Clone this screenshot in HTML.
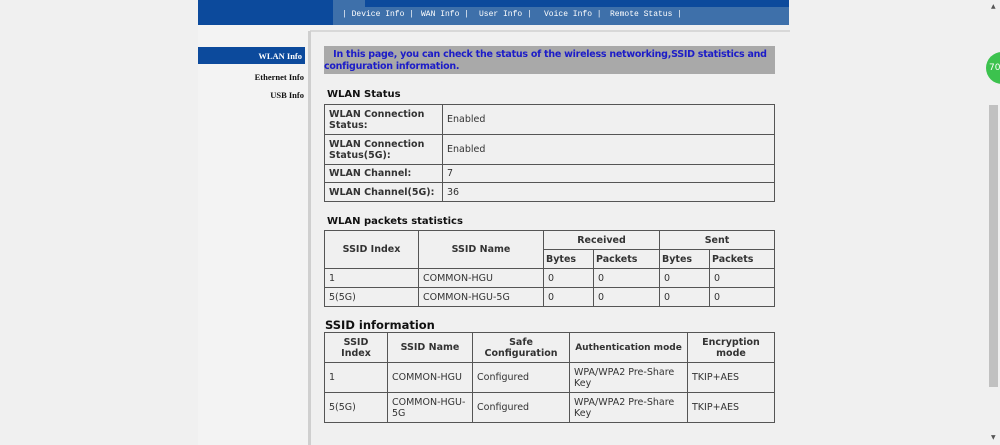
<!DOCTYPE html>
<html><head><style>
body{margin:0;width:1000px;height:445px;background:#f0f0f0;position:relative;overflow:hidden;font-family:Verdana,"DejaVu Sans",sans-serif;font-size:10px;color:#333}
.a{position:absolute}
table{position:absolute;border-collapse:collapse;font-size:9.5px}
td{border:1px solid #555;padding:0 4px;color:#333}
th{border:1px solid #555;font-weight:bold;color:#333;padding:0 2px;font-size:9.5px}
td.b{font-weight:bold}
.nav{font-family:"Liberation Mono",monospace;font-size:8px;color:#fff;top:10px;white-space:pre}
.side{font-family:"Liberation Serif",serif;font-weight:bold;font-size:8.5px;color:#111;text-align:right;width:100px}
h4{position:absolute;margin:0;font-size:10px;color:#111}
</style></head><body>
<div class="a" style="left:198px;top:0;width:591px;height:25px;background:#0c4a9c"></div>
<div class="a" style="left:333px;top:7px;width:456px;height:18px;background:#3e70aa"></div>
<div class="a" style="left:333px;top:0;width:32px;height:7px;background:#3e70aa"></div>
<div class="a nav" style="left:342px">| Device Info |</div>
<div class="a nav" style="left:421px">WAN Info |</div>
<div class="a nav" style="left:479px">User Info |</div>
<div class="a nav" style="left:544px">Voice Info |</div>
<div class="a nav" style="left:610px">Remote Status |</div>
<div class="a" style="left:198px;top:25px;width:112px;height:420px;background:#f3f3f3"></div>
<div class="a" style="left:310px;top:30px;width:480px;height:2px;background:#d8d8d8"></div>
<div class="a" style="left:308px;top:31px;width:3px;height:414px;background:#cfcfcf"></div>
<div class="a" style="left:198px;top:47px;width:107px;height:17px;background:#0c4a9c"></div>
<div class="a side" style="left:202px;top:51px;color:#fff">WLAN Info</div>
<div class="a side" style="left:204px;top:72px">Ethernet Info</div>
<div class="a side" style="left:204px;top:90px">USB Info</div>
<div class="a" style="left:324px;top:46px;width:451px;height:28px;background:#a9a9a9;color:#1c1cc8;font-weight:bold;font-size:9.5px;line-height:12px;padding-top:3px;box-sizing:border-box;letter-spacing:-0.25px;white-space:nowrap">&nbsp;&nbsp;&nbsp;In this page, you can check the status of the wireless networking,SSID statistics and<br>configuration information.</div>
<h4 style="left:327px;top:89px">WLAN Status</h4>
<table style="left:324px;top:104px;width:451px">
<tr style="height:30px"><td class="b" style="width:109px">WLAN Connection Status:</td><td>Enabled</td></tr>
<tr style="height:30px"><td class="b">WLAN Connection Status(5G):</td><td>Enabled</td></tr>
<tr style="height:18px"><td class="b">WLAN Channel:</td><td>7</td></tr>
<tr style="height:19px"><td class="b">WLAN Channel(5G):</td><td>36</td></tr>
</table>
<h4 style="left:327px;top:216px">WLAN packets statistics</h4>
<table style="left:324px;top:230px;width:451px">
<tr style="height:19px"><th rowspan="2" style="width:89px">SSID Index</th><th rowspan="2" style="width:120px">SSID Name</th><th colspan="2">Received</th><th colspan="2">Sent</th></tr>
<tr style="height:19px"><th style="width:45px;text-align:left">Bytes</th><th style="text-align:left;width:61px">Packets</th><th style="width:45px;text-align:left">Bytes</th><th style="text-align:left">Packets</th></tr>
<tr style="height:19px"><td>1</td><td>COMMON-HGU</td><td>0</td><td>0</td><td>0</td><td>0</td></tr>
<tr style="height:19px"><td>5(5G)</td><td>COMMON-HGU-5G</td><td>0</td><td>0</td><td>0</td><td>0</td></tr>
</table>
<h4 style="left:325px;top:318px;font-size:11.5px">SSID information</h4>
<table style="left:324px;top:332px;width:451px;table-layout:fixed">
<colgroup><col style="width:63px"><col style="width:85px"><col style="width:97px"><col style="width:118px"><col></colgroup>
<tr style="height:30px"><th>SSID<br>Index</th><th>SSID Name</th><th>Safe Configuration</th><th style="white-space:nowrap;font-size:9px">Authentication mode</th><th>Encryption mode</th></tr>
<tr style="height:30px"><td>1</td><td>COMMON-HGU</td><td>Configured</td><td>WPA/WPA2 Pre-Share Key</td><td>TKIP+AES</td></tr>
<tr style="height:30px"><td>5(5G)</td><td>COMMON-HGU-5G</td><td>Configured</td><td>WPA/WPA2 Pre-Share Key</td><td>TKIP+AES</td></tr>
</table>
<div class="a" style="left:989px;top:105px;width:9px;height:282px;background:#c1c1c1"></div>
<div class="a" style="left:991px;top:3px;font-size:6px;color:#555">▲</div>
<div class="a" style="left:991px;top:434px;font-size:6px;color:#555">▼</div>
<div class="a" style="left:986px;top:52px;width:32px;height:32px;border-radius:50%;background:#3cc24e;color:#fff;font-size:9px;line-height:32px;text-indent:3px">70</div>
</body></html>
